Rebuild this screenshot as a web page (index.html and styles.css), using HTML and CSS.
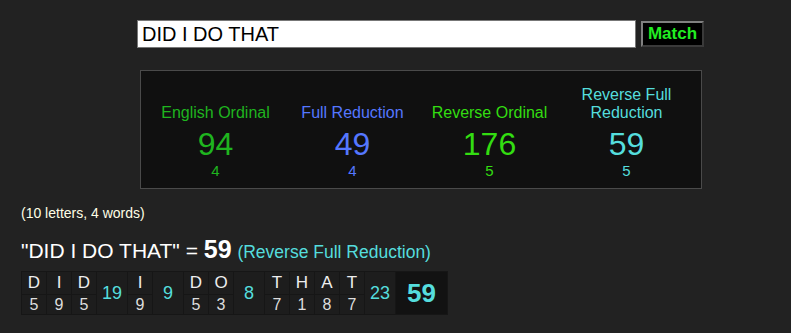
FILE: index.html
```html
<!DOCTYPE html>
<html lang="en">
<head>
    <meta charset="UTF-8">
    <title>Gematria Calculator</title>
    <link rel="stylesheet" href="styles.css">
</head>
<body>

    <div class="page">
        <form class="search-bar">
            <input class="search-input" type="text" value="DID I DO THAT">
            <button class="match-btn" type="button">Match</button>
        </form>

        <div class="results-box">
            <div class="cipher eng-ord">
                <div class="cipher-name">English Ordinal</div>
                <div class="cipher-value">94</div>
                <div class="cipher-red">4</div>
            </div>
            <div class="cipher full-red">
                <div class="cipher-name">Full Reduction</div>
                <div class="cipher-value">49</div>
                <div class="cipher-red">4</div>
            </div>
            <div class="cipher rev-ord">
                <div class="cipher-name">Reverse Ordinal</div>
                <div class="cipher-value">176</div>
                <div class="cipher-red">5</div>
            </div>
            <div class="cipher rev-full-red">
                <div class="cipher-name">Reverse Full Reduction</div>
                <div class="cipher-value">59</div>
                <div class="cipher-red">5</div>
            </div>
        </div>
    </div>

    <div class="breakdown">
        <div class="word-count">(10 letters, 4 words)</div>
        <div class="phrase-sum">"DID I DO THAT" = <b class="sum-num">59</b> <span class="sum-cipher">(Reverse Full Reduction)</span></div>

        <table class="letter-table">
            <tr>
                <td class="ch">D</td><td class="ch">I</td><td class="ch">D</td>
                <td class="word-total" rowspan="2">19</td>
                <td class="ch">I</td>
                <td class="word-total" rowspan="2">9</td>
                <td class="ch">D</td><td class="ch">O</td>
                <td class="word-total" rowspan="2">8</td>
                <td class="ch">T</td><td class="ch">H</td><td class="ch">A</td><td class="ch">T</td>
                <td class="word-total" rowspan="2">23</td>
                <td class="grand-total" rowspan="2">59</td>
            </tr>
            <tr>
                <td class="num">5</td><td class="num">9</td><td class="num">5</td>
                <td class="num">9</td>
                <td class="num">5</td><td class="num">3</td>
                <td class="num">7</td><td class="num">1</td><td class="num">8</td><td class="num">7</td>
            </tr>
        </table>
    </div>

</body>
</html>
```

FILE: styles.css
```css
:root {
    --c-bg: #222222;
    --c-box: #101010;
    --c-eng: #1fb51f;
    --c-full: #5577ff;
    --c-rev: #33dd11;
    --c-revfull: #55dddd;
}
body {
    font-family: "Liberation Sans", Arial, sans-serif;
    background-color: var(--c-bg);
    color: #eeeeee;
    margin: 0;
}
.page {
    width: 567px;
    margin-left: 137px;
    padding-top: 20px;
}
.search-bar {
    display: flex;
    align-items: center;
    gap: 5px;
    margin: 0;
}
.search-input {
    width: 499px;
    height: 28px;
    box-sizing: border-box;
    border: 1px solid #777777;
    background: #ffffff;
    color: #000000;
    font-family: "Liberation Sans", Arial, sans-serif;
    font-size: 20px;
    padding: 0 4px;
    margin: 0;
}
.match-btn {
    height: 26px;
    width: 63px;
    box-sizing: border-box;
    background: #000000;
    color: #22ee22;
    border: 2px solid;
    border-color: #808080 #3a3a3a #3a3a3a #808080;
    font-family: "Liberation Sans", Arial, sans-serif;
    font-weight: bold;
    font-size: 17px;
    padding: 0;
}
.results-box {
    margin: 22px 0 0 3px;
    width: 562px;
    box-sizing: border-box;
    background: var(--c-box);
    border: 1px solid #4a4a4a;
    padding: 15px 6px 9px;
    display: grid;
    grid-template-columns: repeat(4, 137px);
    align-items: end;
}
.cipher {
    text-align: center;
}
.cipher-name {
    font-size: 16px;
    line-height: 18px;
    padding: 0 4px;
}
.cipher-value {
    font-size: 32px;
    line-height: 37px;
    margin-top: 4px;
}
.cipher-red {
    font-size: 15px;
    line-height: 16px;
}
.eng-ord { color: var(--c-eng); }
.full-red { color: var(--c-full); }
.rev-ord { color: var(--c-rev); }
.rev-full-red { color: var(--c-revfull); }

.breakdown {
    padding: 16px 0 0 21px;
}
.word-count {
    font-size: 14px;
    line-height: 16px;
    color: #ffffe6;
}
.phrase-sum {
    margin-top: 16px;
    font-size: 21px;
    line-height: 24px;
    color: #ffffff;
}
.sum-num {
    font-size: 25px;
}
.sum-cipher {
    font-size: 17.5px;
    color: var(--c-revfull);
}
.letter-table {
    margin-top: 7px;
    border-collapse: collapse;
    background: #1d1d1d;
}
.letter-table td {
    padding: 0;
    text-align: center;
    border: 1px solid #161616;
}
.ch {
    width: 24px;
    height: 22px;
    font-size: 17px;
    color: #eeeeee;
}
.num {
    height: 19px;
    font-size: 16px;
    color: #dddddd;
}
.word-total {
    width: 30px;
    font-size: 18px;
    color: var(--c-revfull);
}
.grand-total {
    width: 51px;
    background: #121212;
    font-size: 26px;
    font-weight: bold;
    color: var(--c-revfull);
}
```
